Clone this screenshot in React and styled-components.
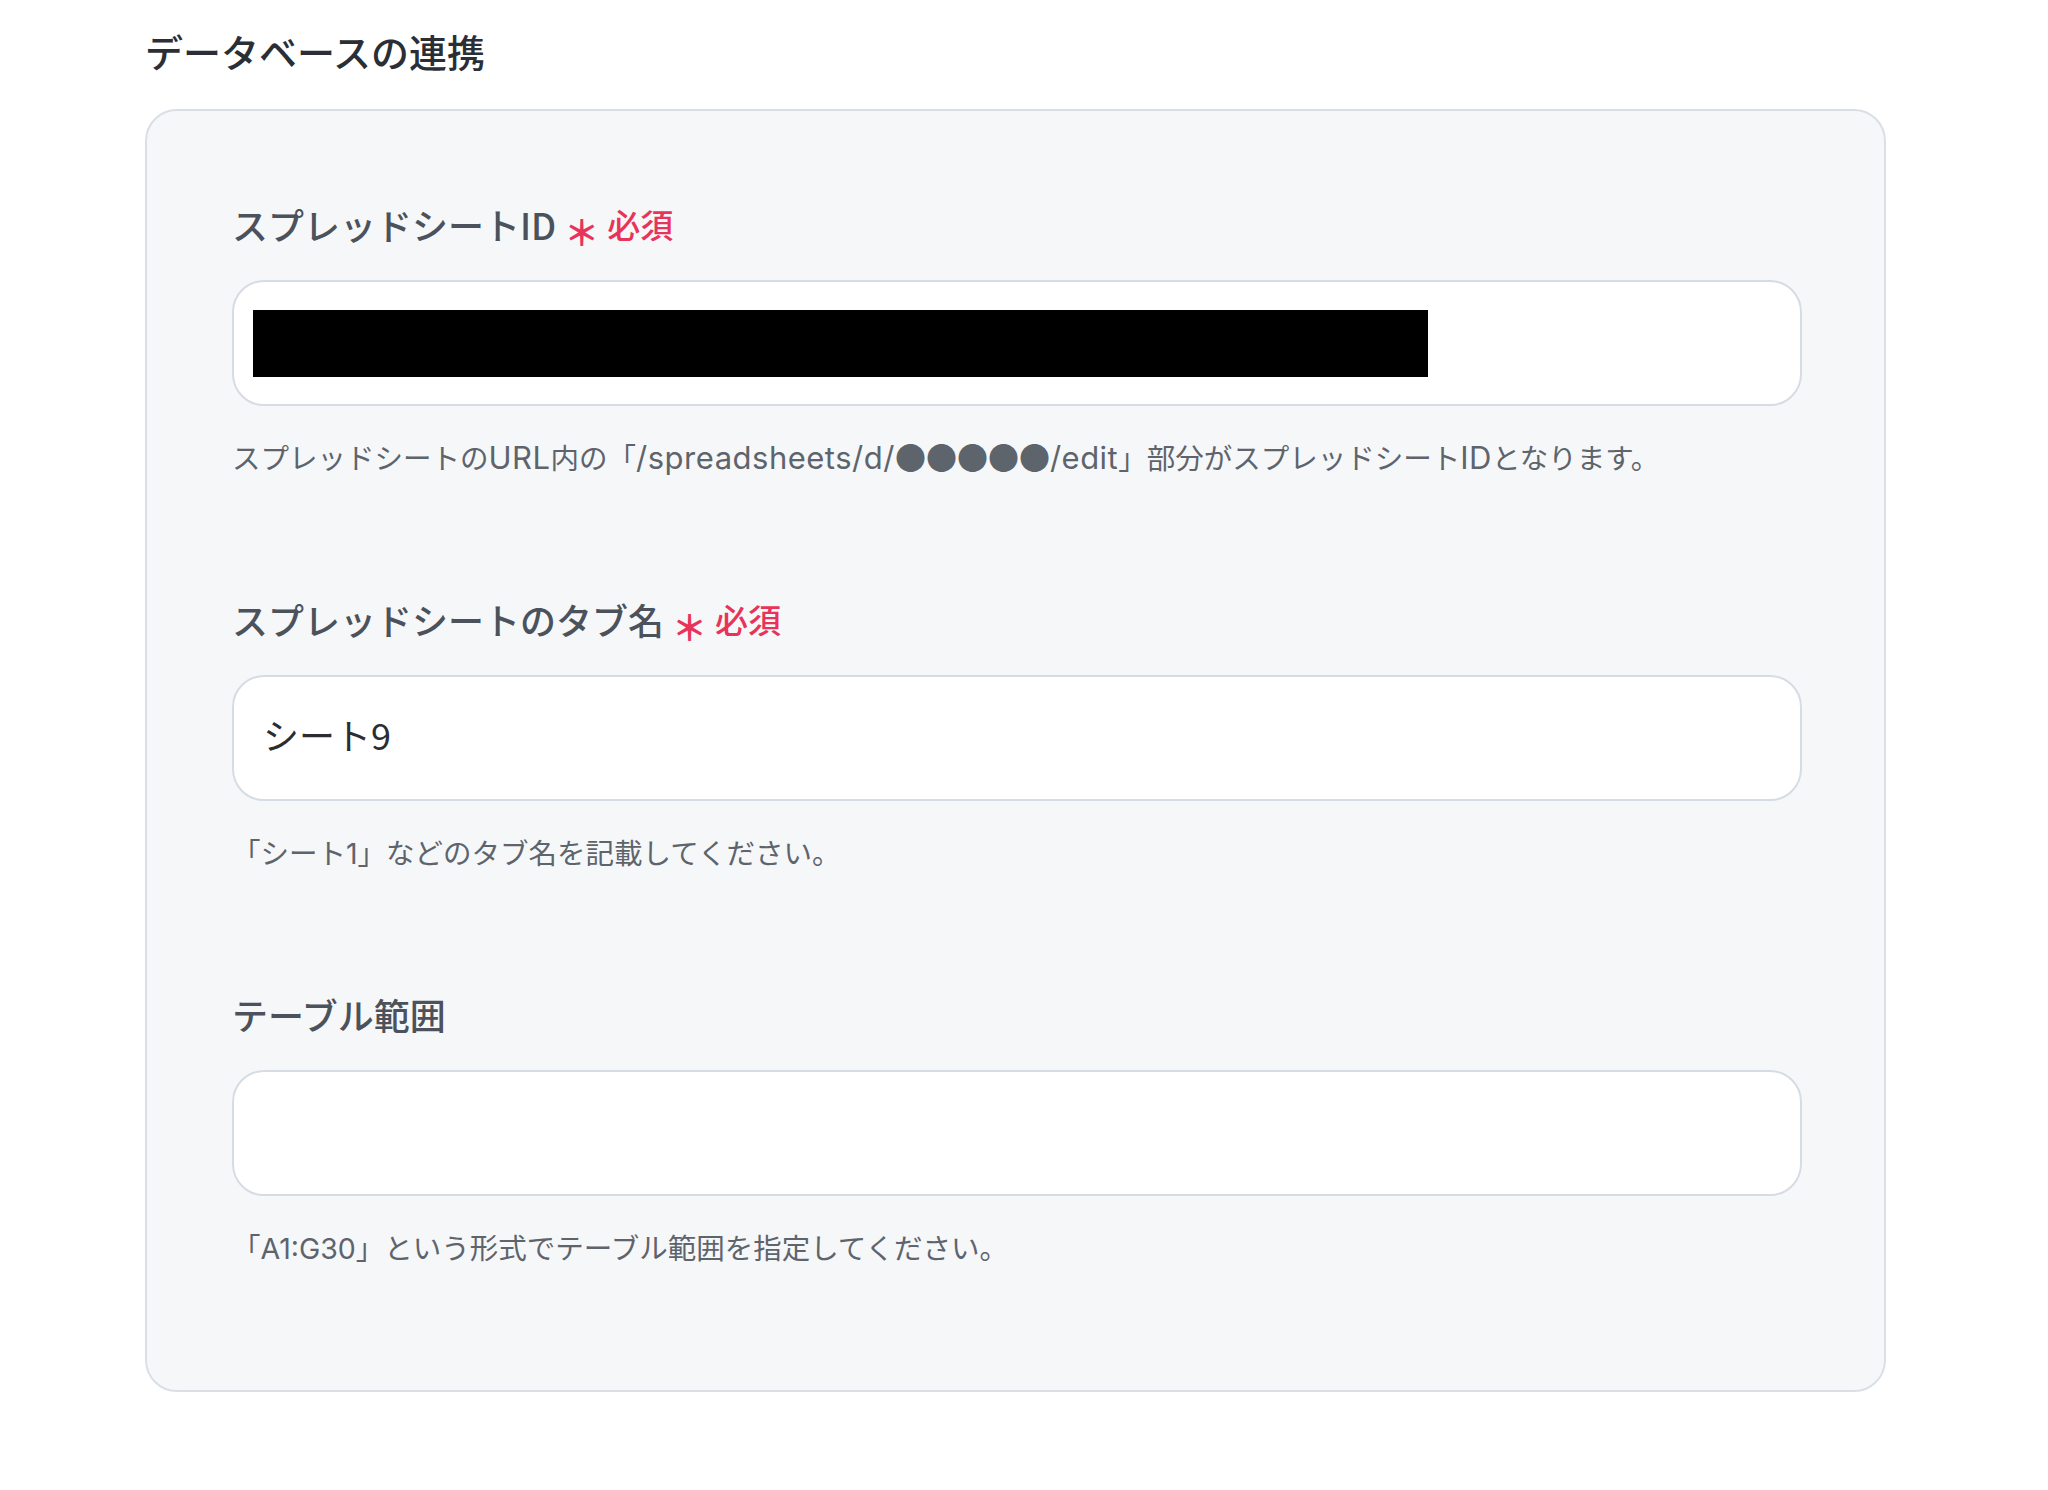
import styled, { createGlobalStyle } from "styled-components";

const GlobalStyle = createGlobalStyle`
  body {
    margin: 0;
    background: #ffffff;
    font-family: "Noto Sans CJK JP", "Noto Sans", sans-serif;
  }
`;

const Page = styled.div`
  padding: 22px 0 0 145px;
  width: 1741px;
`;

const Heading = styled.h2`
  margin: 0 0 30px;
  font-size: 38px;
  line-height: 57px;
  font-weight: 500;
  color: #2b2f35;
`;

const Panel = styled.section`
  display: flex;
  flex-direction: column;
  row-gap: 112px;
  padding: 86px 82px 120px 85px;
  background: #f6f7f9;
  border: 2px solid #dadfe6;
  border-radius: 32px;
`;

const Field = styled.div`
  display: flex;
  flex-direction: column;
`;

const Label = styled.div`
  display: flex;
  align-items: center;
  column-gap: 8px;
  height: 54px;
  font-size: 36px;
  line-height: 54px;
  font-weight: 500;
  color: #4b525b;
`;

const Required = styled.span`
  display: flex;
  align-items: center;
  column-gap: 8px;
  font-size: 33px;
  font-weight: 500;
  color: #e8345a;
`;

const Star = styled.span`
  font-size: 35px;
  font-weight: 700;
  line-height: 1;
  padding-top: 12px;
`;

const Input = styled.div`
  margin-top: 29px;
  height: 114px;
  box-sizing: content-box;
  display: flex;
  align-items: center;
  padding: 0 29px 8px;
  background: #ffffff;
  border: 2px solid #d6dce3;
  border-radius: 32px;
  font-size: 36px;
  color: #2a2d31;
`;

const Redacted = styled.div`
  width: 1175px;
  height: 67px;
  margin: 8px 0 0 -10px;
  background: #000000;
`;

const Help = styled.p`
  margin: 32px 0 0;
  height: 42px;
  font-family: Inter, "Noto Sans CJK JP", sans-serif;
  font-size: 28.5px;
  line-height: 42px;
  color: #5e646c;
  white-space: nowrap;
`;

const Latin = styled.span`
  font-size: 31px;
  letter-spacing: 0.5px;
  line-height: 1;
`;

const Dots = styled.span`
  font-family: "Noto Sans CJK JP", sans-serif;
  font-size: 31px;
  line-height: 1;
`;

const fields = [
  {
    label: "スプレッドシートID",
    required: true,
    redacted: true,
    help: (
      <>
        スプレッドシートの<Latin>URL</Latin>内の「<Latin>/spreadsheets/d/</Latin>
        <Dots>●●●●●</Dots>
        <Latin>/edit</Latin>」部分がスプレッドシート<Latin>ID</Latin>となります。
      </>
    ),
  },
  {
    label: "スプレッドシートのタブ名",
    required: true,
    value: "シート9",
    help: "「シート1」などのタブ名を記載してください。",
  },
  {
    label: "テーブル範囲",
    value: "",
    help: "「A1:G30」という形式でテーブル範囲を指定してください。",
  },
];

export default function App() {
  return (
    <Page>
      <GlobalStyle />
      <Heading>データベースの連携</Heading>
      <Panel>
        {fields.map((f) => (
          <Field key={f.label}>
            <Label>
              {f.label}
              {f.required && (
                <Required>
                  <Star>＊</Star>必須
                </Required>
              )}
            </Label>
            <Input>{f.redacted ? <Redacted /> : f.value}</Input>
            <Help>{f.help}</Help>
          </Field>
        ))}
      </Panel>
    </Page>
  );
}
